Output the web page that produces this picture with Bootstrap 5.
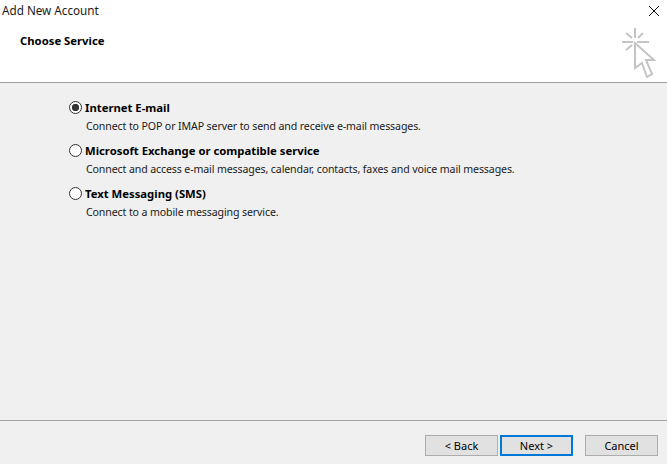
<!DOCTYPE html>
<html lang="en">
<head>
<meta charset="utf-8">
<title>Add New Account</title>
<link rel="stylesheet" href="https://cdn.jsdelivr.net/npm/bootstrap@5.3.0/dist/css/bootstrap.min.css">
<style>
html,body{height:100%;}
body{width:667px;height:464px;overflow:hidden;background:#f0f0f0;color:#000;font-family:"Noto Sans","Open Sans",sans-serif;font-size:11px;line-height:16px;}
.dlg{height:464px;}
.hdr{height:83px;background:#fff;border-bottom:1px solid #a0a0a0;padding:2px 0 0 2px;}
.wtitle{font-size:11.7px;color:#1a1a1a;line-height:16px;}
.stitle{font-weight:700;font-size:11.3px;padding:15px 0 0 18px;color:#000;}
.hright{width:47px;}
.xbtn{width:12px;height:12px;margin:3px 7px 0 0;}
.spark{width:36px;height:50px;margin:11px 11px 0 0;}
.opts{padding:17px 0 0 69px;}
.opt{height:43px;}
.fake-radio{width:13px;height:13px;border:1px solid #333;border-radius:50%;background:#fff;flex:none;margin-top:1px;margin-right:3px;}
.fake-radio.on{background:radial-gradient(circle,#333 0 3.4px,#fff 4px);}
.oname{font-weight:700;font-size:11.3px;}
.odesc{padding:2px 0 0 17px;font-size:10.6px;letter-spacing:-.12px;color:#1a1a1a;}
.ftr{height:44px;border-top:1px solid #a0a0a0;padding:14px 9px 0 0;}
.wbtn{width:73px;height:21px;padding:0;border:1px solid #adadad;border-radius:0;background:#e1e1e1;color:#000;font-size:11px;line-height:18px;}
.wbtn.def{border:2px solid #0078d7;margin-left:2px;margin-right:12px;}
.wbtn.def:hover,.wbtn:hover{background:#e1e1e1;color:#000;}
</style>
</head>
<body>
<div class="dlg d-flex flex-column">
  <div class="hdr d-flex justify-content-between">
    <div>
      <div class="wtitle">Add New Account</div>
      <div class="stitle">Choose Service</div>
    </div>
    <div class="hright d-flex flex-column align-items-end">
      <svg class="xbtn" viewBox="0 0 12 12" stroke="#111" stroke-width="1" aria-hidden="true"><path d="M1 1L11 11M11 1L1 11"/></svg>
      <svg class="spark" viewBox="0 0 36 50" fill="none" stroke="#c4c4c4" stroke-width="2" aria-hidden="true">
        <path d="M15 0V10M2 14H13M17 14H29M6 5l6 5M23 5l-5 5M6 22l6-5"/>
        <path d="M15 15V40L22 35L27 49L32 46L26 32L34 32Z" stroke-linejoin="miter"/>
      </svg>
    </div>
  </div>
  <div class="opts flex-grow-1">
    <div class="opt">
      <div class="d-flex align-items-start"><span class="fake-radio on"></span><span class="oname">Internet E-mail</span></div>
      <div class="odesc">Connect to POP or IMAP server to send and receive e-mail messages.</div>
    </div>
    <div class="opt">
      <div class="d-flex align-items-start"><span class="fake-radio"></span><span class="oname">Microsoft Exchange or compatible service</span></div>
      <div class="odesc">Connect and access e-mail messages, calendar, contacts, faxes and voice mail messages.</div>
    </div>
    <div class="opt">
      <div class="d-flex align-items-start"><span class="fake-radio"></span><span class="oname">Text Messaging (SMS)</span></div>
      <div class="odesc">Connect to a mobile messaging service.</div>
    </div>
  </div>
  <div class="ftr d-flex justify-content-end">
    <button type="button" class="btn wbtn">&lt; Back</button>
    <button type="button" class="btn wbtn def">Next &gt;</button>
    <button type="button" class="btn wbtn">Cancel</button>
  </div>
</div>
<script src="https://cdn.jsdelivr.net/npm/bootstrap@5.3.0/dist/js/bootstrap.bundle.min.js"></script>
</body>
</html>
